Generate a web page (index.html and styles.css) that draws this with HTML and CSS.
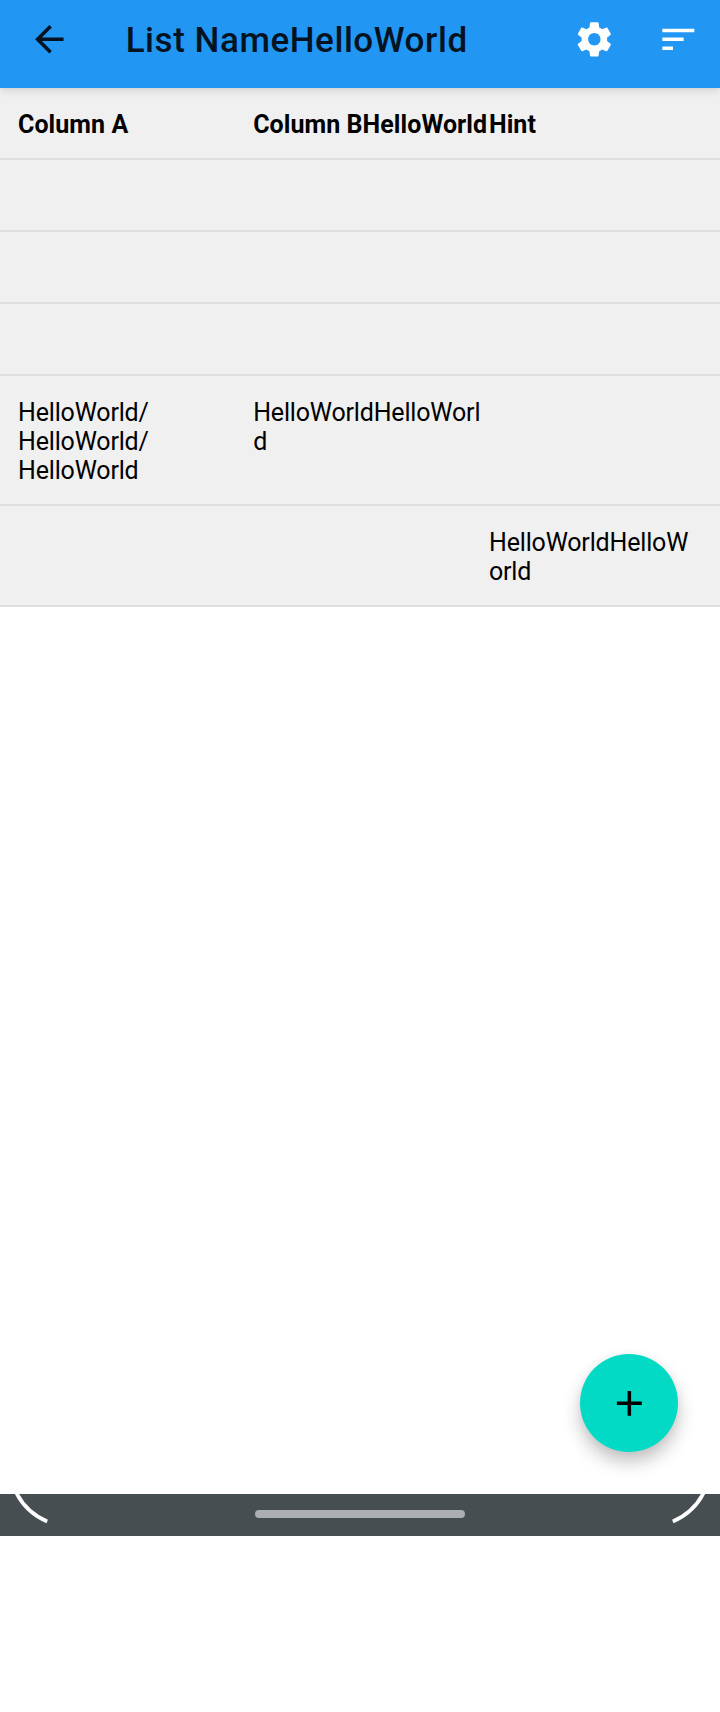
FILE: index.html
```html
<!DOCTYPE html>
<html lang="en">
<head>
<meta charset="utf-8">
<title>List</title>
<link rel="stylesheet" href="styles.css">
</head>
<body>
<div class="screen">
  <header class="app-bar">
    <svg class="icon icon-back" viewBox="0 0 24 24"><path d="M20 11H7.83l5.59-5.59L12 4l-8 8 8 8 1.41-1.41L7.83 13H20v-2z"/></svg>
    <h1 class="title">List NameHelloWorld</h1>
    <svg class="icon icon-light" viewBox="0 0 24 24"><path d="M19.14 12.94c.04-.3.06-.61.06-.94 0-.32-.02-.64-.07-.94l2.03-1.58c.18-.14.23-.41.12-.61l-1.92-3.32c-.12-.22-.37-.29-.59-.22l-2.39.96c-.5-.38-1.03-.7-1.62-.94l-.36-2.54c-.04-.24-.24-.41-.48-.41h-3.84c-.24 0-.43.17-.47.41l-.36 2.54c-.59.24-1.13.57-1.62.94l-2.39-.96c-.22-.08-.47 0-.59.22L2.74 8.87c-.12.21-.08.47.12.61l2.03 1.58c-.05.3-.09.63-.09.94s.02.64.07.94l-2.03 1.58c-.18.14-.23.41-.12.61l1.92 3.32c.12.22.37.29.59.22l2.39-.96c.5.38 1.03.7 1.62.94l.36 2.54c.05.24.24.41.48.41h3.84c.24 0 .44-.17.47-.41l.36-2.54c.59-.24 1.13-.56 1.62-.94l2.39.96c.22.08.47 0 .59-.22l1.92-3.32c.12-.22.07-.47-.12-.61l-2.01-1.58zM12 15.5c-1.93 0-3.5-1.57-3.5-3.5s1.57-3.5 3.5-3.5 3.5 1.57 3.5 3.5-1.57 3.5-3.5 3.5z"/></svg>
    <svg class="icon icon-light icon-sort" viewBox="0 0 24 24"><path d="M3 18h6v-2H3v2zM3 6v2h18V6H3zm0 7h12v-2H3v2z"/></svg>
  </header>
  <main class="content">
    <div class="row row-head"><div class="cell">Column A</div><div class="cell">Column BHelloWorld</div><div class="cell">Hint</div></div>
    <div class="row"></div>
    <div class="row"></div>
    <div class="row"></div>
    <div class="row"><div class="cell">HelloWorld/<br>HelloWorld/<br>HelloWorld</div><div class="cell">HelloWorldHelloWorl<br>d</div><div class="cell"></div></div>
    <div class="row"><div class="cell"></div><div class="cell"></div><div class="cell">HelloWorldHelloW<br>orld</div></div>
    <button class="fab" aria-label="Add"><svg class="icon" viewBox="0 0 24 24"><path d="M19 13h-6v6h-2v-6H5v-2h6V5h2v6h6v2z"/></svg></button>
  </main>
  <nav class="nav-bar">
    <svg class="corner" viewBox="0 0 60 42"><path d="M16-2Q25.5 18 47.2 27.5"/></svg>
    <div class="handle"></div>
    <svg class="corner" viewBox="0 0 60 42"><path d="M44-2Q34.5 18 12.8 27.5"/></svg>
  </nav>
</div>
</body>
</html>
```
FILE: styles.css
```css
* { box-sizing: border-box; }
body { margin: 0; background: #fff; font-family: Roboto, "Liberation Sans", sans-serif; color: #000; }
.screen { width: 720px; height: 1712px; display: flex; flex-direction: column; }
.app-bar {
  position: relative;
  z-index: 1;
  flex: none;
  height: 88px;
  padding: 0 20.5px 10px 28px;
  display: flex;
  align-items: center;
  background: #2196f3;
  box-shadow: 0 2px 8px rgba(0, 0, 0, .15);
}
.icon { display: block; flex: none; width: 42.67px; height: 42.67px; fill: #000; }
.icon-back { fill: #04131f; }
.icon-light { fill: #fff; }
.icon-sort { margin-left: 41.5px; }
.title {
  flex: 1;
  margin: 4px 0 0 55px;
  font-size: 35px;
  line-height: 42px;
  font-weight: 500;
  letter-spacing: .55px;
  color: #04131f;
  white-space: nowrap;
}
.content { position: relative; flex: none; height: 1406px; }
.row {
  display: grid;
  grid-template-columns: 235.2px 235.8px 1fr;
  min-height: 72px;
  padding: 22px 0 19px 18px;
  background: #f0f0f0;
  border-bottom: 2px solid #dfdfdf;
  font-size: 25px;
  line-height: 29px;
  letter-spacing: -.17px;
}
.row-head { font-weight: 700; letter-spacing: .06px; }
.cell { white-space: nowrap; }
.fab {
  position: absolute;
  right: 42px;
  bottom: 42px;
  width: 98px;
  height: 98px;
  padding: 0;
  border: 0;
  border-radius: 50%;
  display: flex;
  align-items: center;
  justify-content: center;
  background: #03dac6;
  box-shadow: 0 10px 18px rgba(0, 0, 0, .24), 0 1px 8px rgba(0, 0, 0, .04);
}
.nav-bar {
  flex: none;
  height: 42px;
  display: flex;
  justify-content: space-between;
  background: #464e52;
}
.corner { width: 60px; height: 42px; fill: none; stroke: #fff; stroke-width: 3.8px; }
.handle { width: 210px; height: 8px; margin-top: 16px; border-radius: 4px; background: #abafb1; }
```
